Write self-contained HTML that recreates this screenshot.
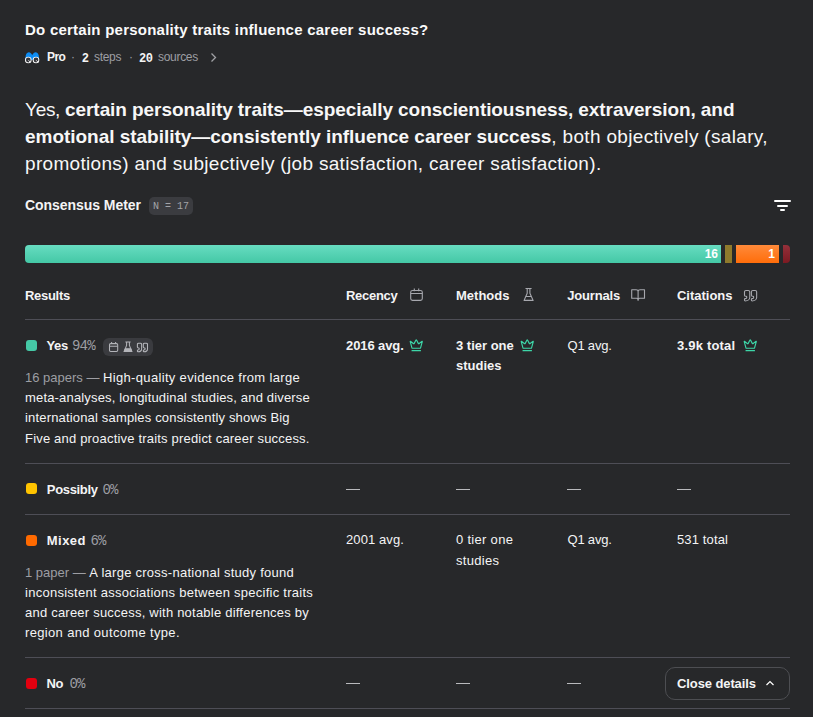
<!DOCTYPE html>
<html><head><meta charset="utf-8">
<style>
*{margin:0;padding:0;box-sizing:border-box}
html,body{width:813px;height:717px;overflow:hidden;background:#27282a}
body{position:relative;font-family:"Liberation Sans",sans-serif;color:#f4f4f5}
.a{position:absolute;white-space:nowrap}
.mono{font-family:"Liberation Mono",monospace}
.g{color:#9d9ea3}
.line{position:absolute;left:25px;width:765px;height:1px;background:#4e4e56}
.sq{position:absolute;left:26px;width:11px;height:11px;border-radius:3px}
.hd{font-size:13px;font-weight:700;letter-spacing:-0.3px;line-height:20px}
.hic{position:absolute;width:13px;height:13px}
.t13{font-size:13px;line-height:20px;letter-spacing:0.2px}
.b13{font-size:13px;line-height:20px;font-weight:700;letter-spacing:-0.1px}
.dash{position:absolute;width:14px;height:1px;background:#b9babd}
</style></head><body>

<svg width="0" height="0" style="position:absolute"><defs><symbol id="crown" viewBox="0 0 24 24"><g fill="none" stroke="#3dd6a8" stroke-width="1.9" stroke-linecap="round" stroke-linejoin="round"><path d="M11.562 3.266a.5.5 0 0 1 .876 0L15.39 8.87a1 1 0 0 0 1.516.294L21.183 5.5a.5.5 0 0 1 .798.519l-2.834 10.246a1 1 0 0 1-.956.734H5.81a1 1 0 0 1-.957-.734L2.02 6.02a.5.5 0 0 1 .798-.519l4.276 3.664a1 1 0 0 0 1.516-.294z"/><path d="M5 21h14"/></g></symbol></defs></svg>
<!-- title -->
<div class="a" style="left:25px;top:20px;font-size:15px;line-height:20px;font-weight:700;letter-spacing:0.24px;color:#fafafa">Do certain personality traits influence career success?</div>

<!-- sub line -->
<svg class="a" style="left:25px;top:52px" width="15" height="12" viewBox="0 0 15 12">
  <path d="M0.5 6 C0.5 2.5 1.8 0.3 3.8 0.3 C5.4 0.3 6.4 1.8 7.2 3.2 C8 1.8 9 0.3 10.7 0.3 C12.7 0.3 14 2.5 14 6 L14 8 L0.5 8 Z" fill="#0d8df5"/>
  <circle cx="3.3" cy="8" r="3.3" fill="#fff"/>
  <circle cx="11" cy="8" r="3.3" fill="#fff"/>
  <circle cx="3.3" cy="8" r="2.4" fill="#35363b"/>
  <circle cx="11" cy="8" r="2.4" fill="#35363b"/>
  <path d="M3.5 8.3L5.4 10.3M11.2 8.3L13.1 10.3" stroke="#fff" stroke-width="0.9"/>
</svg>
<div class="a" style="left:47px;top:48px;font-size:12px;line-height:18px;font-weight:700;letter-spacing:-0.6px">Pro</div>
<div class="a g" style="left:71px;top:48px;font-size:12px;line-height:18px">·</div>
<div class="a mono" style="left:81.8px;top:50px;font-size:12px;line-height:18px;font-weight:700;letter-spacing:-0.4px">2</div>
<div class="a g" style="left:94px;top:48px;font-size:12px;line-height:18px;letter-spacing:-0.3px">steps</div>
<div class="a g" style="left:129px;top:48px;font-size:12px;line-height:18px">·</div>
<div class="a mono" style="left:139px;top:50px;font-size:12px;line-height:18px;font-weight:700;letter-spacing:-0.4px">20</div>
<div class="a g" style="left:158px;top:48px;font-size:12px;line-height:18px;letter-spacing:-0.3px">sources</div>
<svg class="a" style="left:208.5px;top:52px" width="9" height="11" viewBox="0 0 9 11"><path d="M2.5 1.5 L6.5 5.5 L2.5 9.5" stroke="#a0a1a5" stroke-width="1.3" fill="none"/></svg>

<!-- answer paragraph -->
<div class="a" style="left:25px;top:97px;font-size:19px;line-height:26.75px;color:#f7f7f7">
<span style="letter-spacing:-0.3px">Yes, </span><b style="letter-spacing:-0.073px">certain personality traits—especially conscientiousness, extraversion, and</b><br>
<b style="letter-spacing:-0.03px">emotional stability—consistently influence career success</b><span style="letter-spacing:0.33px">, both objectively (salary,</span><br>
<span style="letter-spacing:0.32px">promotions) and subjectively (job satisfaction, career satisfaction).</span>
</div>

<!-- consensus meter -->
<div class="a" style="left:25px;top:195px;font-size:14px;line-height:20px;font-weight:700;letter-spacing:-0.05px">Consensus Meter</div>
<div class="a mono" style="left:149px;top:197px;width:44px;height:18px;border-radius:5px;background:#3b3c40;color:#a3a4a8;font-size:10px;line-height:19px;text-align:center">N = 17</div>
<div class="a" style="left:774px;top:200px;width:17px;height:2px;background:#fff;border-radius:1px"></div>
<div class="a" style="left:777px;top:205px;width:11px;height:2px;background:#fff;border-radius:1px"></div>
<div class="a" style="left:780px;top:209px;width:5px;height:2px;background:#fff;border-radius:1px"></div>

<!-- bar -->
<div class="a" style="left:25px;top:245px;width:696px;height:18px;border-radius:4px 0 0 4px;background:linear-gradient(#67dcc1,#44c8a6)"></div>
<div class="a" style="left:700px;top:245px;width:21px;height:18px;color:#fff;font-size:12px;font-weight:700;line-height:18px;text-align:right;padding-right:3px">16</div>
<div class="a" style="left:725px;top:245px;width:7px;height:18px;background:#8e7a2c"></div>
<div class="a" style="left:736px;top:245px;width:43px;height:18px;background:linear-gradient(#ff8a3a,#ff6d0a);color:#fff;font-size:12px;font-weight:700;line-height:18px;text-align:right;padding-right:4px">1</div>
<div class="a" style="left:783px;top:245px;width:7px;height:18px;border-radius:0 4px 4px 0;background:linear-gradient(#95303a,#7d1a22)"></div>

<!-- table header -->
<div class="a hd" style="left:25px;top:286px">Results</div>
<div class="a hd" style="left:346px;top:286px">Recency</div>
<div class="a hd" style="left:456px;top:286px;letter-spacing:0px">Methods</div>
<div class="a hd" style="left:567.3px;top:286px;letter-spacing:-0.18px">Journals</div>
<div class="a hd" style="left:677px;top:286px;letter-spacing:-0.02px">Citations</div>
<svg class="a" style="left:410px;top:288px" width="14" height="14" viewBox="0 0 14 14" fill="none" stroke="#a7a8ae" stroke-width="1.1"><rect x="0.7" y="2.5" width="11.6" height="9.9" rx="1.8"/><path d="M0.7 5.5H12.3M4.3 0.6V3.2M8.7 0.6V3.2"/></svg>
<svg class="a" style="left:522px;top:287px" width="14" height="15" viewBox="0 0 14 15" fill="none" stroke="#a7a8ae" stroke-width="1.1" stroke-linejoin="round"><path d="M3.5 1.5H9.6M5.2 1.6V6.2L2.1 13.4H11.1L7.9 6.2V1.6M3.8 9.5H9.4"/></svg>
<svg class="a" style="left:630px;top:288px" width="16" height="14" viewBox="0 0 16 14" fill="none" stroke="#a7a8ae" stroke-width="1.1" stroke-linejoin="round"><path d="M8.1 3.5C8.1 2.4 7.2 1.7 6 1.7H1.7V10.3H6.6C7.5 10.3 8.1 11 8.1 12.8M8.1 3.5C8.1 2.4 9 1.7 10.2 1.7H14.5V10.3H9.6C8.7 10.3 8.1 11 8.1 12.8M8.1 3.5V12.8"/></svg>
<svg class="a" style="left:741px;top:288px" width="19" height="16" viewBox="0 0 19 16"><g fill="none" stroke="#a7a8ae" stroke-width="1.1" stroke-linejoin="round"><path vector-effect="non-scaling-stroke" transform="translate(3.5,2.5) scale(0.75,0.58) translate(-3,-3)" d="M5 3a2 2 0 0 0-2 2v6a2 2 0 0 0 2 2 1 1 0 0 1 1 1v1a2 2 0 0 1-2 2 1 1 0 0 0-1 1v2a1 1 0 0 0 1 1 6 6 0 0 0 6-6V5a2 2 0 0 0-2-2z"/><path vector-effect="non-scaling-stroke" transform="translate(10.4,2.5) scale(0.75,0.58) translate(-3,-3)" d="M5 3a2 2 0 0 0-2 2v6a2 2 0 0 0 2 2 1 1 0 0 1 1 1v1a2 2 0 0 1-2 2 1 1 0 0 0-1 1v2a1 1 0 0 0 1 1 6 6 0 0 0 6-6V5a2 2 0 0 0-2-2z"/></g></svg>
<div class="line" style="top:319px"></div>

<!-- Yes row -->
<div class="sq" style="top:340px;background:#45c9a6"></div>
<div class="a b13" style="left:46.5px;top:336px;letter-spacing:-0.4px">Yes</div>
<div class="a mono g" style="left:72px;top:336px;font-size:14px;line-height:20px;letter-spacing:-0.8px">94%</div>
<div class="a" style="left:103px;top:338px;width:50px;height:18px;border-radius:6px;background:#3a3b3f"></div>
<svg class="a" style="left:103px;top:338px" width="50" height="18" viewBox="0 0 50 18" fill="none" stroke="#b3b4b9" stroke-width="1.05" stroke-linejoin="round">
<rect x="6.5" y="5.6" width="8.2" height="7.8" rx="1.2"/><path d="M6.5 8.2H14.7M8.6 4V6M12.6 4V6"/>
<path d="M22.4 3.9H27.6M23.6 3.9V7.4L21.2 13.4H28.8L26.4 7.4V3.9"/><path d="M22.2 10.8H27.8L28.8 13.4H21.2Z" fill="#b3b4b9"/>
<path vector-effect="non-scaling-stroke" transform="translate(34.4,5.2) scale(0.6,0.48) translate(-3,-3)" d="M5 3a2 2 0 0 0-2 2v6a2 2 0 0 0 2 2 1 1 0 0 1 1 1v1a2 2 0 0 1-2 2 1 1 0 0 0-1 1v2a1 1 0 0 0 1 1 6 6 0 0 0 6-6V5a2 2 0 0 0-2-2z"/>
<path vector-effect="non-scaling-stroke" transform="translate(40.3,5.2) scale(0.6,0.48) translate(-3,-3)" d="M5 3a2 2 0 0 0-2 2v6a2 2 0 0 0 2 2 1 1 0 0 1 1 1v1a2 2 0 0 1-2 2 1 1 0 0 0-1 1v2a1 1 0 0 0 1 1 6 6 0 0 0 6-6V5a2 2 0 0 0-2-2z"/>
</svg>

<div class="a t13" style="left:25px;top:368px;line-height:20.2px"><span class="g" style="letter-spacing:0px">16 papers — </span><span style="letter-spacing:0.33px">High-quality evidence from large</span><br><span style="letter-spacing:0.17px">meta-analyses, longitudinal studies, and diverse</span><br><span style="letter-spacing:0.17px">international samples consistently shows Big</span><br><span style="letter-spacing:0.19px">Five and proactive traits predict career success.</span></div>
<div class="a b13" style="left:346px;top:336px">2016 avg.</div>
<div class="a b13" style="left:456px;top:336px;line-height:19.5px;letter-spacing:0px">3 tier one<br>studies</div>
<div class="a t13" style="left:567.5px;top:336px;letter-spacing:-0.2px">Q1 avg.</div>
<div class="a b13" style="left:677px;top:336px;letter-spacing:0.2px">3.9k total</div>
<svg class="a" style="left:409px;top:338px" width="14.5" height="14.5"><use href="#crown"/></svg>
<svg class="a" style="left:520.2px;top:338px" width="14.5" height="14.5"><use href="#crown"/></svg>
<svg class="a" style="left:743px;top:338px" width="14.5" height="14.5"><use href="#crown"/></svg>
<div class="line" style="top:463px"></div>

<!-- Possibly -->
<div class="sq" style="top:483px;background:#ffc400"></div>
<div class="a b13" style="left:46.8px;top:480px;letter-spacing:-0.33px">Possibly</div>
<div class="a mono g" style="left:102.5px;top:480px;font-size:14px;line-height:20px;letter-spacing:-0.8px">0%</div>
<div class="dash" style="left:346px;top:489px"></div>
<div class="dash" style="left:456px;top:489px"></div>
<div class="dash" style="left:567px;top:489px"></div>
<div class="dash" style="left:677px;top:489px"></div>
<div class="line" style="top:514px"></div>

<!-- Mixed -->
<div class="sq" style="top:535px;background:#ff6a00"></div>
<div class="a b13" style="left:46.8px;top:531px;letter-spacing:0.45px">Mixed</div>
<div class="a mono g" style="left:90.5px;top:531px;font-size:14px;line-height:20px;letter-spacing:-0.8px">6%</div>
<div class="a t13" style="left:25px;top:563px"><span class="g" style="letter-spacing:0px">1 paper — </span><span style="letter-spacing:0.26px">A large cross-national study found</span><br><span style="letter-spacing:0.26px">inconsistent associations between specific traits</span><br><span style="letter-spacing:0.22px">and career success, with notable differences by</span><br><span style="letter-spacing:0.34px">region and outcome type.</span></div>
<div class="a t13" style="left:346px;top:530px;letter-spacing:0.1px">2001 avg.</div>
<div class="a t13" style="left:456px;top:530px;line-height:20.5px;letter-spacing:0.3px">0 tier one<br>studies</div>
<div class="a t13" style="left:567.5px;top:530px;letter-spacing:-0.2px">Q1 avg.</div>
<div class="a t13" style="left:677px;top:530px;letter-spacing:0.13px">531 total</div>
<div class="line" style="top:657px"></div>

<!-- No -->
<div class="sq" style="top:678px;background:#e3000f"></div>
<div class="a b13" style="left:46.5px;top:674px;letter-spacing:-0.3px">No</div>
<div class="a mono g" style="left:69.5px;top:674px;font-size:14px;line-height:20px;letter-spacing:-0.8px">0%</div>
<div class="dash" style="left:346px;top:683px"></div>
<div class="dash" style="left:456px;top:683px"></div>
<div class="dash" style="left:567px;top:683px"></div>
<div class="a" style="left:665px;top:667px;width:125px;height:33px;border:1px solid #4d4e52;border-radius:10px;background:#27282a"></div>
<div class="a b13" style="left:677px;top:674px">Close details</div>
<svg class="a" style="left:764px;top:678px" width="12" height="10" viewBox="0 0 12 10"><path d="M2.5 7L6 3.5L9.5 7" stroke="#fff" stroke-width="1.2" fill="none"/></svg>
<div class="line" style="top:708px"></div>

</body></html>
